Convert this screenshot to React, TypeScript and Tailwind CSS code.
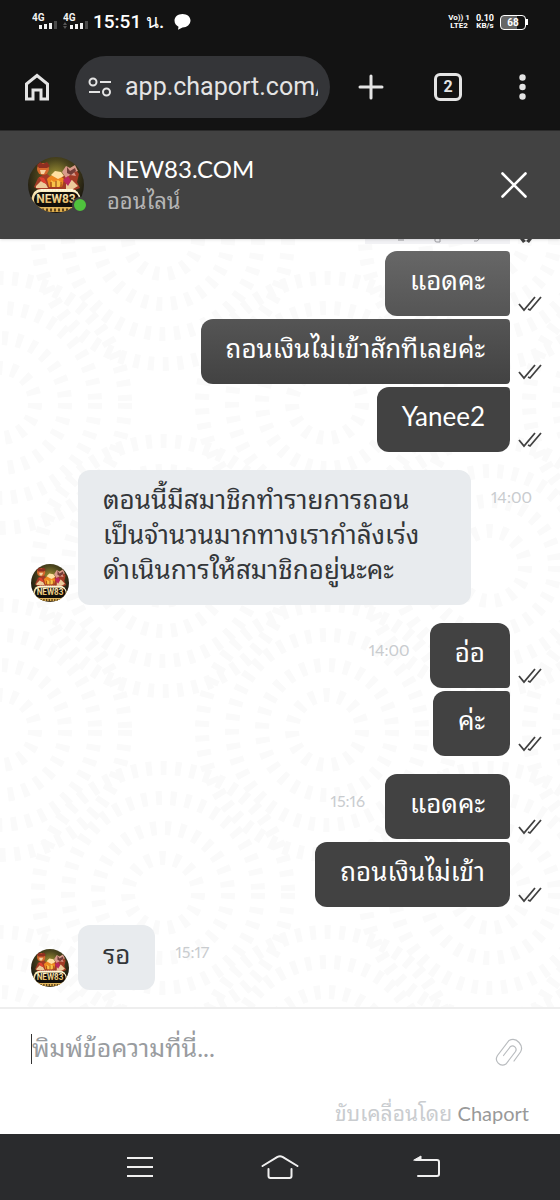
import { ReactNode } from "react";
import { clsx } from "clsx";

interface Message {
    lines: string[];
    time?: string;
    shape?: string;
}

interface Group {
    from: "me" | "agent";
    messages: Message[];
}

const groups: Group[] = [
    {
        from: "me",
        messages: [
            { lines: ["แอดคะ"], shape: "rounded-l-xl rounded-r bg-linear-to-b from-[#676767] to-[#555555]" },
            { lines: ["ถอนเงินไม่เข้าสักทีเลยค่ะ"], shape: "rounded-l-xl rounded-r bg-linear-to-b from-[#555555] to-[#424242]" },
            { lines: ["Yanee2"], shape: "rounded-xl rounded-tr bg-[#424242]" },
        ],
    },
    {
        from: "agent",
        messages: [
            {
                lines: ["ตอนนี้มีสมาชิกทำรายการถอน", "เป็นจำนวนมากทางเรากำลังเร่ง", "ดำเนินการให้สมาชิกอยู่นะคะ"],
                time: "14:00",
                shape: "w-[393px]",
            },
        ],
    },
    {
        from: "me",
        messages: [
            { lines: ["อ่อ"], time: "14:00", shape: "rounded-xl rounded-br bg-[#424242]" },
            { lines: ["ค่ะ"], shape: "rounded-xl rounded-tr bg-[#424242]" },
        ],
    },
    {
        from: "me",
        messages: [
            { lines: ["แอดคะ"], time: "15:16", shape: "rounded-xl rounded-br bg-[#424242]" },
            { lines: ["ถอนเงินไม่เข้า"], shape: "rounded-xl rounded-tr bg-[#424242]" },
        ],
    },
    { from: "agent", messages: [{ lines: ["รอ"], time: "15:17" }] },
];

function Avatar({ className }: { className: string }) {
    return (
        <svg viewBox="0 0 56 56" className={clsx("shrink-0 rounded-full", className)} role="img" aria-label="NEW83">
            <defs>
                <radialGradient id="glow" cx="50%" cy="35%" r="60%">
                    <stop offset="0" stopColor="#a89a38" />
                    <stop offset="0.5" stopColor="#4b451d" />
                    <stop offset="1" stopColor="#17140f" />
                </radialGradient>
                <linearGradient id="gold" x1="0" y1="0" x2="0" y2="1">
                    <stop offset="0" stopColor="#fff5cf" />
                    <stop offset="1" stopColor="#dca946" />
                </linearGradient>
            </defs>
            <rect width="56" height="56" fill="url(#glow)" />
            <path d="M6 30l4-9 8-5 6 5 4-4 6 3 4-6 8-4 5 7-2 8 3 6-8 3H12z" fill="#a23b26" />
            <path d="M8 29l5-5 5 3 2 4H8zM38 27l6-4 6 6-5 3h-7z" fill="#eccb9b" />
            <circle cx="15" cy="12" r="6" fill="#d5682c" />
            <path d="M9 8l3-3 3 2 4-2 3 4-3 2H11z" fill="#8e2f21" />
            <path d="M12 13h6l-2 4h-3z" fill="#f6d3a1" />
            <path d="M19 22q8-9 17 0l-2 8H21z" fill="#ed8720" />
            <path d="M23 18l4-4 6 1 3 4-6 3z" fill="#ffe0a2" />
            <path d="M23 23l3 2 4-2 4 3-3 4h-7z" fill="#f9c349" />
            <path d="M34 15l4-6 4 2 5-3 3 6-4 1 2 4-6-1-4 3z" fill="#d99b8b" />
            <path d="M39 10l3 4 5-3 1 3-5 4-4-2z" fill="#743d38" />
            <path d="M35 23l5-4 3 5-3 5z" fill="#bb285d" />
            <path d="M11 20l5 1 3 6-5-2z" fill="#e04130" />
            <path d="M23 25v5m5-6v6m5-5v5" stroke="#8e3811" strokeWidth="1" />
            <path d="M13 32h30q7 0 10 10l-9 13H13L3 43q2-11 10-11z" fill="url(#gold)" />
            <path d="M13 33h30q5 0 8 7" stroke="#fff7da" strokeWidth="2" strokeDasharray="2 1" fill="none" />
            <rect x="6" y="35" width="45" height="15" rx="7" fill="#110e0a" />
            <path d="M14 53h29" stroke="#5b421b" strokeWidth="3" strokeDasharray="2 2" />
            <text x="28" y="46" textAnchor="middle" fontSize="12" fontWeight="700" fill="url(#gold)" fontFamily="Roboto, sans-serif">
                NEW83
            </text>
        </svg>
    );
}

function ReadTicks() {
    return (
        <svg width="24" height="16" viewBox="0 0 24 16" fill="none" stroke="#414141" strokeWidth="1.8" className="shrink-0" aria-label="Read">
            <path d="M1 8l5 6L17 1M10 13l2 1L23 1" />
        </svg>
    );
}

function Backdrop() {
    const centers = [
        [0, 164],
        [327, 164],
        [163, 0],
        [163, 327],
    ];
    return (
        <svg className="absolute inset-0 size-full" aria-hidden="true">
            <defs>
                <pattern id="rings" width="327" height="327" patternUnits="userSpaceOnUse">
                    {centers.map(([cx, cy]) => (
                        <g key={`${cx}-${cy}`} fill="none" stroke="#fafafa" strokeWidth="14">
                            {[35, 65, 95, 125].map((r) => (
                                <circle key={r} cx={cx} cy={cy} r={r} strokeDasharray="6 8.66" />
                            ))}
                        </g>
                    ))}
                </pattern>
            </defs>
            <rect width="100%" height="100%" fill="url(#rings)" />
        </svg>
    );
}

function Bubble({ className, lines }: { className?: string; lines: string[] }) {
    return (
        <div className={clsx("px-[25px] pt-3 pb-[18px] text-[26px] whitespace-nowrap", className)}>
            {lines.map((line) => (
                <p key={line} className="leading-[35px]">
                    {line}
                </p>
            ))}
        </div>
    );
}

function Time({ children }: { children: ReactNode }) {
    return <time className="text-base leading-[22px] text-[#c9cccf] proportional-nums">{children}</time>;
}

function MessageRow({ message, from }: { message: Message; from: Group["from"] }) {
    if (from === "me") {
        return (
            <div className="flex items-end justify-end pr-[18px]">
                {message.time && (
                    <div className="mr-5 self-start pt-[15px]">
                        <Time>{message.time}</Time>
                    </div>
                )}
                <Bubble lines={message.lines} className={clsx("text-white", message.shape)} />
                <div className="ml-2 pb-1">
                    <ReadTicks />
                </div>
            </div>
        );
    }
    return (
        <div className="flex items-end pl-[31px]">
            <Avatar className="mb-[3px] size-[38px]" />
            <Bubble lines={message.lines} className={clsx("ml-[9px] rounded-xl bg-[#e8ebee] text-[#333639]", message.shape)} />
            <div className="ml-5 self-start pt-[15px]">
                <Time>{message.time}</Time>
            </div>
        </div>
    );
}

function Signal({ roaming }: { roaming?: boolean }) {
    return (
        <svg width="26" height="18" viewBox="0 0 26 18" fill="#f2f2f2" aria-hidden="true">
            <text x="0" y="8" fontSize="10" fontWeight="700" fontFamily="Roboto, sans-serif">
                4G
            </text>
            {roaming && <path d="M0 12l2-3 2 3zM0 13l2 3 2-3z" fill="#555555" />}
            <path d="M7 12h3v4H7zM12 11h3v5h-3zM17 10h3v6h-3z" />
            <path d="M22 8h3v8h-3z" fill="#4a4a4a" />
        </svg>
    );
}

function StatusBar() {
    return (
        <div className="flex h-11 items-center bg-[#131313] pr-8 pl-8 text-white">
            <div className="flex gap-[5px]">
                <Signal />
                <Signal roaming />
            </div>
            <span className="ml-1 text-[19px] leading-6 font-medium">15:51 น.</span>
            <svg width="17" height="16" viewBox="0 0 17 16" fill="#ffffff" className="ml-2.5" aria-hidden="true">
                <path d="M8.500 0C13 0 16.500 2.800 16.500 6.500S13 13.500 8.500 13.500L4 15.800 4.500 12.700C2 11.500.5 9.300.5 6.500.5 2.800 4 0 8.500 0z" />
            </svg>
            <div className="ml-auto flex items-center gap-1.5 text-center text-[8px] leading-2 font-bold">
                <div>
                    <p>Vo)) 1</p>
                    <p>LTE2</p>
                </div>
                <div>
                    <p className="text-[9px]">0.10</p>
                    <p>KB/s</p>
                </div>
                <div className="flex items-center">
                    <span className="h-[15px] w-[26px] rounded border border-white bg-linear-to-r from-[#666666] from-68% to-[#131313] to-68% text-[10px] leading-[13px]">68</span>
                    <span className="h-1.5 w-0.5 bg-white" />
                </div>
            </div>
        </div>
    );
}

function BrowserBar() {
    return (
        <div className="flex h-[87px] items-center border-b border-[#2c2c2c] bg-[#131313] pr-[25px] pl-[22px] text-[#e4e4e4]">
            <button aria-label="Home">
                <svg width="30" height="30" viewBox="0 0 30 30" fill="none" stroke="currentColor" strokeWidth="3">
                    <path d="M4.500 12L15 3.500 25.500 12v15H19v-9h-8v9H4.500z" />
                </svg>
            </button>
            <div className="ml-[23px] flex h-[62px] min-w-0 flex-1 items-center overflow-hidden rounded-full bg-[#343538] pr-3 pl-3">
                <svg width="26" height="20" viewBox="0 0 26 20" fill="none" stroke="currentColor" strokeWidth="2" className="shrink-0">
                    <circle cx="6" cy="5" r="3.500" />
                    <path d="M13 5h11M2 15h11" />
                    <circle cx="19.500" cy="15" r="3.500" />
                </svg>
                <input
                    aria-label="Address"
                    readOnly
                    value="app.chaport.com/"
                    className="ml-3 min-w-0 flex-1 bg-transparent text-[25px] outline-none"
                />
            </div>
            <button aria-label="New tab" className="ml-7">
                <svg width="26" height="26" viewBox="0 0 26 26" stroke="currentColor" strokeWidth="3" strokeLinecap="round">
                    <path d="M13 2v22M2 13h22" />
                </svg>
            </button>
            <button aria-label="Tabs" className="ml-[50px] size-7 rounded-md border-3 border-current text-base leading-[22px] font-bold">
                2
            </button>
            <button aria-label="Menu" className="ml-12">
                <svg width="25" height="26" viewBox="0 0 25 26" fill="currentColor">
                    <circle cx="12.500" cy="3.500" r="3.200" />
                    <circle cx="12.500" cy="13" r="3.200" />
                    <circle cx="12.500" cy="22.500" r="3.200" />
                </svg>
            </button>
        </div>
    );
}

function ChatHeader() {
    return (
        <header className="relative z-10 flex h-[108px] items-center bg-[#424242] pr-8 pl-7 shadow-sm">
            <div className="relative">
                <Avatar className="size-14" />
                <span className="absolute -right-1 bottom-0 size-4 rounded-full border-2 border-[#424242] bg-[#4fc23d]" />
            </div>
            <div className="ml-[23px]">
                <h1 className="text-2xl leading-8 text-white">NEW83.COM</h1>
                <p className="text-[22px] leading-8 text-[#b5b5b5]">ออนไลน์</p>
            </div>
            <button aria-label="Close" className="ml-auto">
                <svg width="28" height="28" viewBox="0 0 28 28" stroke="#ffffff" strokeWidth="2.600" strokeLinecap="round">
                    <path d="M2.500 2.500l23 23M25.500 2.500l-23 23" />
                </svg>
            </button>
        </header>
    );
}

function Composer() {
    return (
        <footer className="border-t-2 border-[#eeeeee] bg-white px-[31px] pt-5 pb-2">
            <div className="flex items-start">
                <span className="mt-[5px] h-[30px] w-px bg-[#333333]" />
                <textarea
                    aria-label="ข้อความ"
                    rows={1}
                    placeholder="พิมพ์ข้อความที่นี่..."
                    className="h-[71px] min-w-0 flex-1 resize-none text-[25px] leading-[36px] outline-none placeholder:text-[#999c9f]"
                />
                <button aria-label="Attach file" className="mt-[9px] mr-1.5">
                    <svg width="28" height="28" viewBox="0 0 28 28" fill="none" stroke="#b9bcbf" strokeWidth="1.200" strokeLinecap="round">
                        <path d="M19 23L25.500 14C29 8 22 -1.500 14 2.500L2.500 17.500C-1 23 5 29.500 11 26L20.500 13.500C22.500 10 18.500 6.500 15.500 8.500L8.500 17.500" />
                    </svg>
                </button>
            </div>
            <p className="text-right text-[21px] leading-[26px] text-[#c9cccf]">
                ขับเคลื่อนโดย{" "}
                <a href="#chaport" className="text-xl leading-[26px] text-[#999999]">
                    Chaport
                </a>
            </p>
        </footer>
    );
}

function NavigationBar() {
    return (
        <nav className="flex h-[66px] items-center justify-center gap-[102px] bg-[#2a2b2d] pl-[7px] text-[#f0f0f0]">
            <button aria-label="Recent apps">
                <svg width="38" height="24" viewBox="0 0 38 24" stroke="currentColor" strokeWidth="2">
                    <path d="M6 3h26M6 12h26M6 21h26" />
                </svg>
            </button>
            <button aria-label="Home screen">
                <svg width="38" height="26" viewBox="0 0 38 26" fill="none" stroke="currentColor" strokeWidth="2" strokeLinecap="round" strokeLinejoin="round">
                    <path d="M1.500 12L16.500 2.800Q19 1.500 21.500 2.800L36.500 12M7.500 15v7q0 2 2 2h19q2 0 2-2v-7" />
                </svg>
            </button>
            <button aria-label="Back" className="ml-[7px]">
                <svg width="38" height="24" viewBox="0 0 38 24" fill="none" stroke="currentColor" strokeWidth="2" strokeLinecap="round">
                    <path d="M8 5h21q2 0 2 2v12q0 2-2 2H10" />
                    <path d="M6 5l7-4v4z" fill="currentColor" strokeWidth="1" />
                </svg>
            </button>
        </nav>
    );
}

export default function App() {
    return (
        <div className="flex min-h-screen flex-col bg-white font-['Lato','Noto_Sans_Thai_Looped','Loma','Garuda','Waree','Noto_Sans_Thai',sans-serif]">
            <div className="font-['Roboto',sans-serif]">
                <StatusBar />
                <BrowserBar />
            </div>
            <ChatHeader />
            <main className="relative flex-1 overflow-hidden pb-[17px]">
                <Backdrop />
                <div className="relative">
                    {/* tail of the message scrolled under the header */}
                    <div className="mb-[7px] flex h-[5px] justify-end pr-[18px]">
                        <div className="w-[145px] bg-[#f2f2f5]">
                            <svg width="145" height="5" viewBox="0 0 145 5" fill="none" stroke="#9a9aa0">
                                <path d="M33 1h6M70 0v2q0 1 2 1h3V0M109 2q4 1 5-2" />
                            </svg>
                        </div>
                        <svg width="24" height="5" viewBox="0 0 24 5" fill="#414141" className="ml-2">
                            <path d="M2 0h4l2 2 2-2h4L11 4 8 2 5 4z" />
                        </svg>
                    </div>
                    <div className="flex flex-col gap-[18px]">
                        {groups.map((group, index) => (
                            <div key={index} className="flex flex-col gap-[3px]">
                                {group.messages.map((message) => (
                                    <MessageRow key={message.lines[0]} message={message} from={group.from} />
                                ))}
                            </div>
                        ))}
                    </div>
                </div>
            </main>
            <Composer />
            <NavigationBar />
        </div>
    );
}
